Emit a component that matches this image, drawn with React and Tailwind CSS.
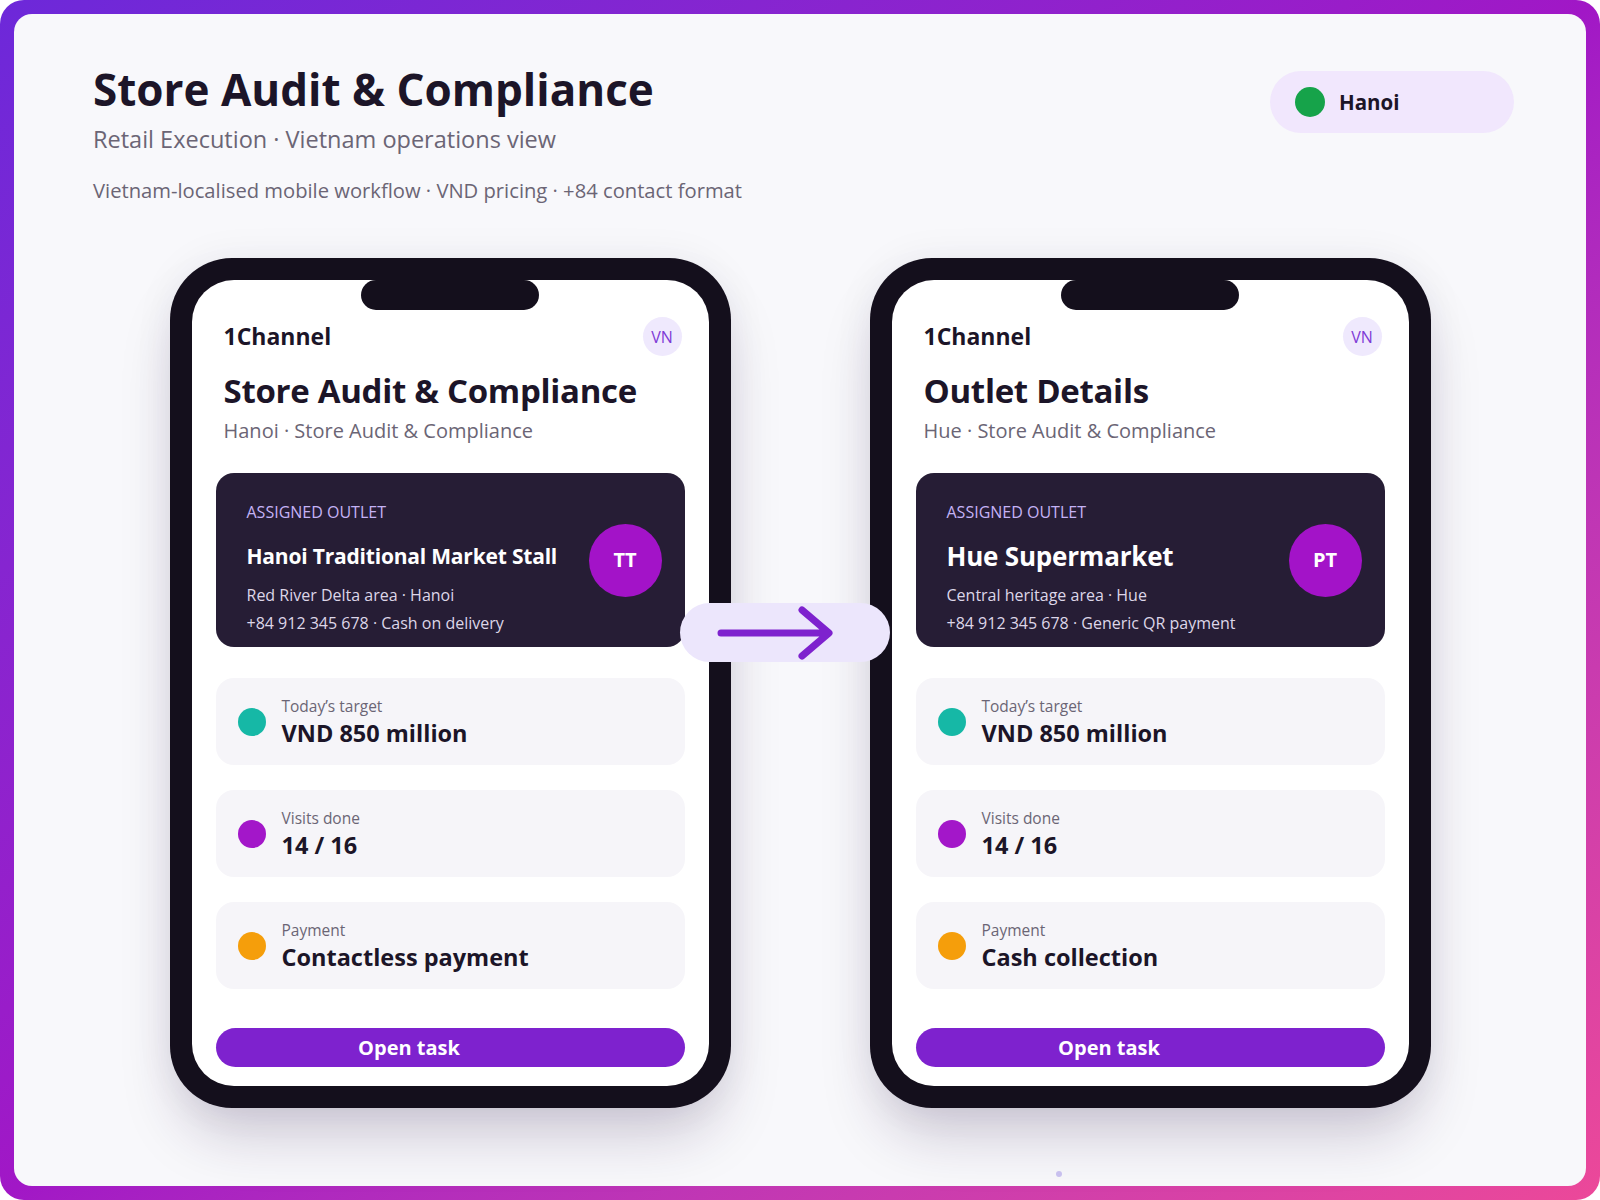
import React from "react";

const phones = [
  {
    heading: "Store Audit & Compliance",
    sub: "Hanoi · Store Audit & Compliance",
    outlet: "Hanoi Traditional Market Stall",
    nameSize: "text-[21px]",
    initials: "TT",
    area: "Red River Delta area · Hanoi",
    contact: "+84 912 345 678 · Cash on delivery",
    payment: "Contactless payment",
  },
  {
    heading: "Outlet Details",
    sub: "Hue · Store Audit & Compliance",
    outlet: "Hue Supermarket",
    nameSize: "text-[26px]",
    initials: "PT",
    area: "Central heritage area · Hue",
    contact: "+84 912 345 678 · Generic QR payment",
    payment: "Cash collection",
  },
];

const StatCard = ({ dot, label, value }) => (
  <div className="h-[87px] rounded-[18px] bg-[#f6f5f9] flex items-center pl-[22px]">
    <span className={`w-[28px] h-[28px] rounded-full ${dot}`} />
    <div className="ml-[16px] flex flex-col">
      <span className="text-[15.5px] leading-[20px] text-[#6b6575]">{label}</span>
      <span className="mt-[2px] text-[23.5px] leading-[30px] font-bold text-[#1c1528]">{value}</span>
    </div>
  </div>
);

const Phone = ({ p }) => (
  <div className="w-[561px] h-[850px] rounded-[62px] bg-[#140f1c] p-[22px] shadow-[0_36px_60px_-12px_rgba(40,20,70,0.22),0_0_40px_rgba(40,20,70,0.06)]">
    <div className="relative h-full rounded-[42px] bg-white flex flex-col px-[24px]">
      <div className="absolute top-0 left-1/2 -translate-x-1/2 w-[178px] h-[30px] rounded-full bg-[#140f1c]" />

      {/* header */}
      <div className="mt-[37px] flex items-center justify-between pl-[8px] pr-[3px]">
        <span className="text-[23px] font-bold text-[#1c1528]">1Channel</span>
        <span className="w-[39px] h-[39px] rounded-full bg-[#efe9fd] text-[#7e3ad6] text-[16px] flex items-center justify-center">
          VN
        </span>
      </div>
      <h2 className="mt-[15px] pl-[8px] text-[33px] leading-[40px] font-bold tracking-[-0.3px] text-[#1c1528]">{p.heading}</h2>
      <p className="pl-[8px] mt-[7px] text-[20px] leading-[26px] text-[#6b6575]">{p.sub}</p>

      {/* outlet card */}
      <div className="mt-[29px] h-[174px] rounded-[18px] bg-[#261d35] flex items-center justify-between pl-[31px] pr-[23px]">
        <div className="flex flex-col self-start pt-[28px]">
          <span className="text-[16px] leading-[22px] text-[#c5b3f5] uppercase">Assigned outlet</span>
          <span className={`mt-[18px] ${p.nameSize} leading-[30px] font-bold tracking-[-0.2px] text-white`}>{p.outlet}</span>
          <span className="mt-[12px] text-[16px] leading-[24px] text-[#ddd6e8]">{p.area}</span>
          <span className="mt-[4px] text-[16px] leading-[24px] text-[#ddd6e8]">{p.contact}</span>
        </div>
        <span className="w-[73px] h-[73px] rounded-full bg-[#a313c8] text-white font-bold text-[20px] flex items-center justify-center">
          {p.initials}
        </span>
      </div>

      <div className="mt-[31px] flex flex-col gap-[25px]">
        <StatCard dot="bg-[#16b8a6]" label="Today’s target" value="VND 850 million" />
        <StatCard dot="bg-[#a317c9]" label="Visits done" value="14 / 16" />
        <StatCard dot="bg-[#f59e0b]" label="Payment" value={p.payment} />
      </div>

      <button className="mt-[39px] h-[39px] rounded-full bg-[#7e22ce] text-white text-[20px] font-bold pr-[82px]">
        Open task
      </button>
    </div>
  </div>
);

export default function App() {
  return (
    <div
      className="w-[1600px] h-[1200px] rounded-[24px] p-[14px] bg-gradient-to-br from-[#6d28d9] via-[#a117c6] to-[#ec4899]"
      style={{ fontFamily: "'Open Sans', 'Noto Sans', sans-serif" }}
    >
      <div className="relative h-full rounded-[18px] bg-[#f8f8fb] pl-[79px] pr-[72px] pt-[48px]">
        <div className="flex justify-between items-start">
          <div>
            <h1 className="text-[44px] leading-[54px] font-bold text-[#1c1528]">Store Audit &amp; Compliance</h1>
            <p className="mt-[7px] text-[23.5px] leading-[32px] text-[#6b6575]">Retail Execution · Vietnam operations view</p>
            <p className="mt-[22px] text-[20.2px] leading-[26px] text-[#6b6575]">
              Vietnam-localised mobile workflow · VND pricing · +84 contact format
            </p>
          </div>
          <div className="mt-[9px] w-[244px] h-[62px] rounded-full bg-[#f1e7fd] flex items-center pl-[25px]">
            <span className="w-[30px] h-[30px] rounded-full bg-[#16a34a]" />
            <span className="ml-[14px] text-[20.5px] font-bold text-[#1c1528]">Hanoi</span>
          </div>
        </div>

        <div className="mt-[55px] flex justify-center gap-[139px] -ml-[65px] -mr-[58px]">
          {phones.map((p, i) => (
            <Phone key={i} p={p} />
          ))}
        </div>

        {/* flow arrow */}
        <div className="absolute left-[666px] top-[589px] w-[210px] h-[59px] rounded-full bg-[#ece6fc]">
          <svg width="210" height="59" viewBox="0 0 210 59" fill="none">
            <path d="M41 30 H148 M122 7 L149 30 L122 53" stroke="#7e22ce" strokeWidth="7" strokeLinecap="round" strokeLinejoin="round" />
          </svg>
        </div>

        <span className="absolute left-[1042px] top-[1157px] w-[6px] h-[6px] rounded-full bg-[#c8c0ee]" />
      </div>
    </div>
  );
}
